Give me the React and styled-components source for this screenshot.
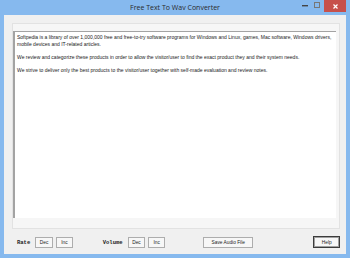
import React from "react"
import styled, { createGlobalStyle } from "styled-components"

const Global = createGlobalStyle`
  html, body {
    margin: 0;
    padding: 0;
    background: #ffffff;
  }
  body {
    width: 350px;
    height: 263px;
    overflow: hidden;
    font-family: "Liberation Sans", Arial, sans-serif;
  }
`

const text = [
  "Softpedia is a library of over 1,000,000 free and free-to-try software programs for Windows and Linux, games, Mac software, Windows drivers, mobile devices and IT-related articles.",
  "We review and categorize these products in order to allow the visitor/user to find the exact product they and their system needs.",
  "We strive to deliver only the best products to the visitor/user together with self-made evaluation and review notes.",
]

export default function App() {
  return (
    <>
      <Global />
      <Window>
        <TitleBar>
          <Title>Free Text To Wav Converter</Title>
          <Controls>
            <MinButton>
              <svg width="6" height="2" viewBox="0 0 6 2">
                <rect x="0" y="0" width="6" height="1.4" fill="#444" />
              </svg>
            </MinButton>
            <MaxButton>
              <svg width="6" height="6" viewBox="0 0 6 6">
                <rect x="0.5" y="0.5" width="5" height="5" fill="none" stroke="#777" strokeWidth="1" />
              </svg>
            </MaxButton>
            <CloseButton>
              <svg width="5" height="5" viewBox="0 0 5 5">
                <path d="M0.5 0.5 L4.5 4.5 M4.5 0.5 L0.5 4.5" stroke="#fff" strokeWidth="1.2" />
              </svg>
            </CloseButton>
          </Controls>
        </TitleBar>
        <Client>
          <Panel>
            <TextBox>
              {text.map((p, i) => (
                <Para key={i}>{p}</Para>
              ))}
            </TextBox>
          </Panel>
          <BottomBar>
            <Label $ml={13}>Rate</Label>
            <Button $ml={5} $w={18}>Dec</Button>
            <Button $ml={3} $w={17}>Inc</Button>
            <Label $ml={30}>Volume</Label>
            <Button $ml={5} $w={18}>Dec</Button>
            <Button $ml={3} $w={17}>Inc</Button>
            <Button $ml={38} $w={51}>Save Audio File</Button>
            <HelpButton $ml={60}>Help</HelpButton>
          </BottomBar>
        </Client>
      </Window>
    </>
  )
}

const Window = styled.div`
  width: 350px;
  height: 258px;
  box-sizing: border-box;
  background: #86b9ee;
  border: 0 solid #86b9ee;
  border-width: 0 4px 4px 4px;
  display: flex;
  flex-direction: column;
`

const TitleBar = styled.div`
  height: 15px;
  position: relative;
  display: flex;
  align-items: center;
  justify-content: center;
`

const Title = styled.div`
  font-family: "Open Sans", "Liberation Sans", sans-serif;
  font-size: 7px;
  color: #2b2b2b;
  margin-top: -1px;
`

const Controls = styled.div`
  position: absolute;
  right: 0;
  top: 0;
  display: flex;
  align-items: flex-start;
`

const MinButton = styled.div`
  width: 12px;
  height: 12px;
  display: flex;
  align-items: flex-end;
  justify-content: center;
  padding-bottom: 0;
  box-sizing: border-box;
  padding-bottom: 5px;
`

const MaxButton = styled.div`
  width: 12px;
  height: 12px;
  display: flex;
  align-items: center;
  justify-content: center;
  margin-top: -1px;
`

const CloseButton = styled.div`
  width: 22px;
  height: 12px;
  margin-left: 1px;
  background: #c7504b;
  display: flex;
  align-items: center;
  justify-content: center;
`

const Client = styled.div`
  flex: 1;
  background: #f0f0f0;
  display: flex;
  flex-direction: column;
  padding: 8px 6px 0 8px;
  min-height: 0;
`

const Panel = styled.div`
  height: 206px;
  box-sizing: border-box;
  border: 1px solid #e2e2e2;
  background: #f6f6f6;
  padding: 7px 3px 10px 0;
  display: flex;
`

const TextBox = styled.div`
  flex: 1;
  background: #ffffff;
  border-left: 2px solid #a3a3a3;
  border-top: 1px solid #a3a3a3;
  padding: 2px 2px 0 2px;
  font-family: "Liberation Sans", Arial, sans-serif;
  font-size: 5px;
  line-height: 6.7px;
  color: #1a1a1a;
`

const Para = styled.p`
  margin: 0 0 6.7px 0;
`

const BottomBar = styled.div`
  flex: 1;
  display: flex;
  align-items: center;
  margin-left: -8px;
  padding-top: 1px;
`

const Label = styled.span`
  margin-left: ${(p) => p.$ml}px;
  font-family: "Liberation Mono", "Courier New", monospace;
  font-weight: bold;
  font-size: 5.5px;
  color: #222;
`

const Button = styled.div`
  margin-left: ${(p) => p.$ml}px;
  width: ${(p) => p.$w}px;
  height: 11px;
  box-sizing: border-box;
  border: 1px solid #adadad;
  background: #f7f7f7;
  display: flex;
  align-items: center;
  justify-content: center;
  font-size: 4.8px;
  color: #222;
`

const HelpButton = styled(Button)`
  width: 27px;
  height: 12px;
  border: 1px solid #3c3c3c;
  box-shadow: inset 0 0 0 1px #a0a0a0;
`
